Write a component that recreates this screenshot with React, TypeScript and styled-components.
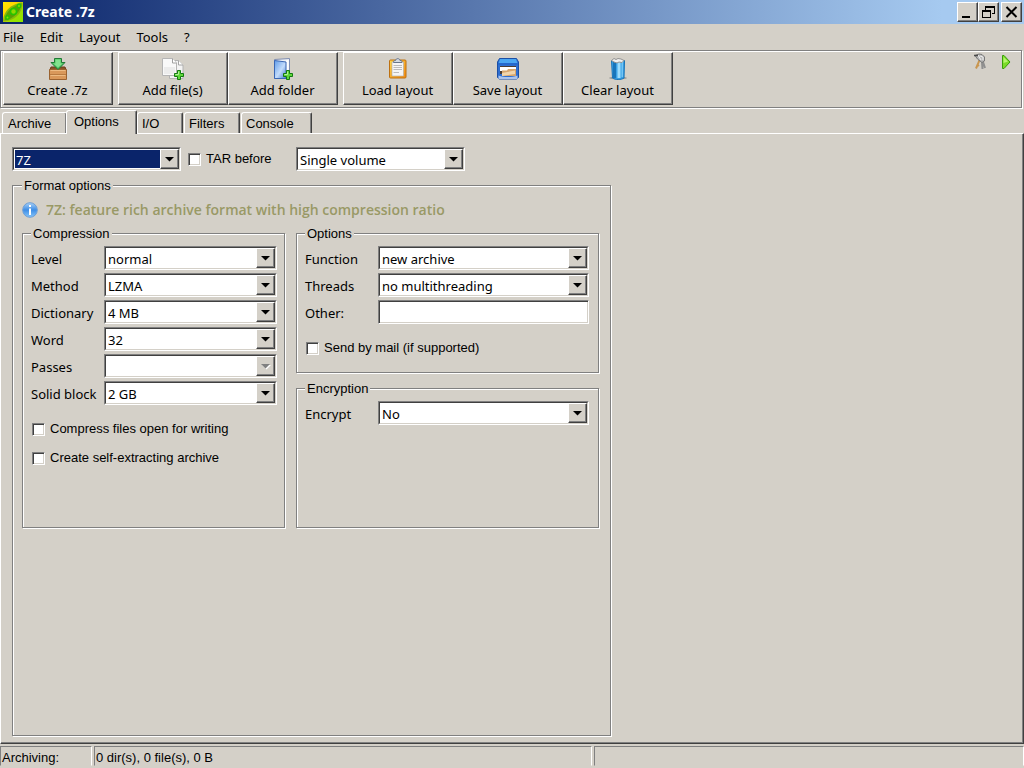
import React from "react";
import styled, { createGlobalStyle, css } from "styled-components";

const face = "#d4d0c8";
const shade = "#808080";
const dark = "#404040";
const navy = "#0a246a";
const uiFont = `"Noto Sans", sans-serif`;
const formFont = `"Liberation Sans", sans-serif`;

const GlobalStyle = createGlobalStyle`
  *, *::before, *::after { box-sizing: border-box; }
  body { margin: 0; background: ${face}; }
  body, button, select, input { font-family: ${uiFont}; font-size: 13px; line-height: 16px; color: #000; }
`;

const raised = css`
  border: 1px solid;
  border-color: #fff ${dark} ${dark} #fff;
  box-shadow: inset -1px -1px 0 ${shade};
`;

const Window = styled.div`
  display: flex;
  flex-direction: column;
  min-height: 100vh;
  background: ${face};
`;

const TitleBar = styled.header`
  display: flex;
  align-items: center;
  height: 24px;
  padding: 0 2px 0 3px;
  background: linear-gradient(to right, ${navy}, #a6caf0 92%);
`;

const Title = styled.h1`
  flex: 1;
  margin: 0 0 0 3px;
  font: bold 14px/20px ${uiFont};
  color: #fff;
`;

const CaptionButton = styled.button<{ $apart?: boolean }>`
  ${raised}
  display: grid;
  place-items: center;
  width: 21px;
  height: 20px;
  margin-left: ${(p) => (p.$apart ? 2 : 0)}px;
  padding: 0;
  background: ${face};
`;

const MenuBar = styled.nav`
  display: flex;
  gap: 16px;
  height: 26px;
  padding: 5px 3px;
`;

const MenuLink = styled.a`
  color: #000;
  text-decoration: none;
`;

const ToolBar = styled.div`
  display: flex;
  align-items: flex-start;
  height: 58px;
  margin-right: 2px;
  padding: 1px 7px 0 2px;
  border: 1px solid ${shade};
  box-shadow: 1px 1px 0 #fff, inset 1px 1px 0 #fff;
`;

const ToolGroup = styled.div`
  display: flex;
  margin-right: 5px;
`;

const ToolButton = styled.button`
  ${raised}
  display: flex;
  flex-direction: column;
  align-items: center;
  gap: 2px;
  width: 110px;
  height: 53px;
  padding: 5px 1px 0 0;
  background: ${face};
`;

const ToolExtras = styled.div`
  display: flex;
  gap: 10px;
  margin-left: auto;
  padding-top: 1px;
`;

const PlainButton = styled.button`
  padding: 0;
  border: 0;
  background: none;
  line-height: 0;
`;

const TabList = styled.div`
  display: flex;
  align-items: flex-end;
  height: 25px;
  padding-left: 2px;
`;

const Tab = styled.button<{ $width: number; $active?: boolean }>`
  ${raised}
  position: relative;
  width: ${(p) => p.$width}px;
  height: ${(p) => (p.$active ? 24 : 21)}px;
  margin-bottom: ${(p) => (p.$active ? -1 : 0)}px;
  margin-right: ${(p) => (p.$active ? 0 : 1)}px;
  padding: ${(p) => (p.$active ? "0 0 1px 7px" : "1px 0 0 4px")};
  border-bottom: 0;
  border-radius: 3px 2px 0 0;
  box-shadow: inset -1px 0 0 ${shade};
  background: ${face};
  font-family: ${formFont};
  text-align: left;
  z-index: ${(p) => (p.$active ? 1 : 0)};

  &:first-child {
    margin-right: -1px;
    padding-left: 5px;
  }
`;

const Page = styled.main`
  flex: 1;
  display: flex;
  flex-direction: column;
  padding: 13px 10px 7px 11px;
  border: 1px solid;
  border-color: #fff ${dark} ${dark} #fff;
  box-shadow: inset -1px -1px 0 ${shade};
`;

const FormatRow = styled.div`
  display: flex;
  align-items: center;
  width: 453px;
  margin-bottom: 5px;
`;

const FormatCombo = styled.div`
  width: 169px;
`;

const TarOption = styled.div`
  flex: 1;
  padding-left: 7px;
`;

const Group = styled.fieldset<{ $right?: number }>`
  min-width: 0;
  margin: 0;
  padding: 4px ${(p) => p.$right ?? 7}px 0 8px;
  border: 1px solid ${shade};
  box-shadow: 1px 1px 0 #fff, inset 1px 1px 0 #fff;
`;

const Legend = styled.legend`
  padding: 2px 2px 0;
  background: ${face};
  font-family: ${formFont};
`;

const FormatGroup = styled(Group)`
  flex: 1;
  width: 100%;
  max-width: 599px;
  padding: 8px 11px 0 9px;
`;

const Info = styled.p`
  display: flex;
  align-items: center;
  gap: 8px;
  margin: 0 0 6px;
  font-family: "Open Sans", sans-serif;
  font-size: 14px;
  font-weight: 600;
  color: #999966;
`;

const Columns = styled.div`
  display: grid;
  grid-template-columns: 263fr 303fr;
  gap: 11px;
`;

const Column = styled.div`
  display: flex;
  flex-direction: column;
  gap: 6px;
`;

const CompressionGroup = styled(Group)`
  min-height: 304px;
`;

const OptionsGroup = styled(Group)`
  min-height: 149px;
`;

const EncryptionGroup = styled(Group)`
  flex: 1;
`;

const Fields = styled.div`
  display: grid;
  gap: 3px;
`;

const FieldRow = styled.div`
  display: grid;
  grid-template-columns: 73px 1fr;
  align-items: center;
`;

const FieldLabel = styled.label`
  padding-top: 2px;
`;

const Checks = styled.div`
  display: grid;
  gap: 13px;
  padding: 16px 0 0 1px;
`;

const CheckLabel = styled.label`
  display: flex;
  align-items: center;
  gap: 5px;
  font-family: ${formFont};
`;

const CheckInput = styled.input`
  appearance: none;
  width: 13px;
  height: 13px;
  margin: 0;
  border: 1px solid;
  border-color: ${shade} #fff #fff ${shade};
  background: #fff;
  box-shadow: inset 1px 1px 0 ${dark}, inset -1px -1px 0 ${face};
`;

const ComboFrame = styled.div`
  position: relative;
  height: 24px;
  border: 1px solid;
  border-color: ${shade} #fff #fff ${shade};
`;

const ComboSelect = styled.select<{ $selected?: boolean }>`
  appearance: none;
  display: block;
  width: 100%;
  height: 22px;
  padding: 1px 20px 0 2px;
  border: 1px solid;
  border-color: ${dark} ${face} ${face} ${dark};
  border-radius: 0;
  outline: none;
  background: ${(p) => (p.$selected ? navy : "#fff")};
  color: ${(p) => (p.$selected ? "#fff" : "#000")};
  box-shadow: inset 0 0 0 1px #fff;
  opacity: 1;
`;

const ComboArrow = styled.span`
  ${raised}
  position: absolute;
  top: 1px;
  right: 1px;
  display: grid;
  place-items: center;
  width: 19px;
  height: 20px;
  background: ${face};
  pointer-events: none;
`;

const TextBox = styled.input`
  width: 100%;
  height: 24px;
  padding: 0 3px;
  border: 1px solid;
  border-color: ${shade} #fff #fff ${shade};
  border-radius: 0;
  background: #fff;
  box-shadow: inset 1px 1px 0 ${dark}, inset -1px -1px 0 ${face};
`;

const StatusBar = styled.footer`
  display: grid;
  grid-template-columns: 92px 498fr 430fr;
  gap: 2px;
  padding: 2px 0;
  font-family: ${formFont};
`;

const StatusCell = styled.div`
  height: 20px;
  padding: 3px 1px 0;
  border: 1px solid;
  border-color: ${shade} #fff ${face} ${shade};
`;

interface ComboProps {
  id: string;
  value: string;
  label?: string;
  selected?: boolean;
  disabled?: boolean;
}

function Combo({ id, value, label, selected, disabled }: ComboProps) {
  return (
    <ComboFrame>
      <ComboSelect id={id} aria-label={label} $selected={selected} disabled={disabled}>
        <option>{value}</option>
      </ComboSelect>
      <ComboArrow aria-hidden="true">
        <svg width="11" height="7" viewBox="0 0 11 7">
          {disabled && <path d="M2 2h9L6.500 6.500z" fill="#fff" />}
          <path d="M1 1h9L5.500 5.500z" fill={disabled ? shade : "#000"} />
        </svg>
      </ComboArrow>
    </ComboFrame>
  );
}

function Field(props: ComboProps & { name: string }) {
  const { name, ...combo } = props;
  return (
    <FieldRow>
      <FieldLabel htmlFor={combo.id}>{name}</FieldLabel>
      <Combo {...combo} />
    </FieldRow>
  );
}

function Check({ children }: { children: React.ReactNode }) {
  return (
    <CheckLabel>
      <CheckInput type="checkbox" />
      {children}
    </CheckLabel>
  );
}

const AppIcon = () => (
  <svg width="20" height="20" viewBox="0 0 20 20" aria-hidden="true">
    <defs>
      <linearGradient id="app" x1="0" y1="0" x2="1" y2="1">
        <stop offset="0" stopColor="#ffe800" />
        <stop offset=".35" stopColor="#ffd400" />
        <stop offset=".65" stopColor="#9be000" />
        <stop offset="1" stopColor="#8ce600" />
      </linearGradient>
    </defs>
    <path d="M0 0h20v20H0z" fill="url(#app)" />
    <path d="M0 19.500C0 14 3 8 8 4.500 12 2 18 0 19.500.5c.5 3-1 9-5 13-4 4-10 6-14.500 6z" fill="#86b80a" />
    <path d="M2 18C2 12.500 6 7.500 10.500 5 14 3 18 1 18.500 1.500 18.500 5 16.500 9 13 12.500 9.500 16 5.500 18 2 18z" fill="#5a9f04" />
    <g fill="#8fd800" stroke="#25c400" strokeWidth="1.500">
      <circle cx="10.500" cy="9.500" r="3" />
      <circle cx="4.500" cy="15.500" r="1.700" />
      <circle cx="16" cy="4" r="1.700" />
    </g>
  </svg>
);

const PlusMark = ({ x, y }: { x: number; y: number }) => (
  <g transform={`translate(${x} ${y})`}>
    <path d="M3.500.5h3v3h3v3h-3v3h-3v-3h-3v-3h3z" fill="#5fd83a" stroke="#137a10" />
    <path d="M4.500 1.500v3h-3" fill="none" stroke="#b4f39a" />
  </g>
);

const CreateIcon = () => (
  <svg width="22" height="22" viewBox="0 0 22 22" aria-hidden="true">
    <path d="M4 9h14l1.500 4h-17z" fill="#8a5528" stroke="#6c3c18" />
    <path d="M2.500 11.500h17v10h-17z" fill="#d9985a" stroke="#9a6230" />
    <path d="M3 16.500h16" stroke="#b87a40" />
    <path d="M3.500 12.500h15M3.500 17.500h15" stroke="#edbb82" />
    <path d="M7.500.5h7v4h3.500L11 11.500 4 4.500h3.500z" fill="#4fc463" stroke="#207a35" />
    <path d="M8.500 1.500h5v4h2L11 9.500 6.500 5.500h2z" fill="#83e28e" />
  </svg>
);

const AddFilesIcon = () => (
  <svg width="24" height="22" viewBox="0 0 24 22" aria-hidden="true">
    <path d="M8.500 2.500h9l4.500 4.500v13.500H8.500z" fill="#f3f3f3" stroke="#b2b2b2" />
    <path d="M17.500 2.500V7H22" fill="#fff" stroke="#a5a5a5" />
    <path d="M1.500.5h10L15.500 5v12.500h-14z" fill="#f9f9f9" stroke="#b5b5b5" />
    <path d="M3 9h11v7H3z" fill="#ececec" />
    <path d="M11.500.5V5h4" fill="#fff" stroke="#a0a0a0" />
    <PlusMark x={13} y={12} />
  </svg>
);

const AddFolderIcon = () => (
  <svg width="22" height="22" viewBox="0 0 22 22" aria-hidden="true">
    <defs>
      <linearGradient id="folder" x1="0" y1="0" x2="1" y2="1">
        <stop offset="0" stopColor="#5f9cea" />
        <stop offset=".55" stopColor="#c3dcfb" />
        <stop offset="1" stopColor="#3f7bd0" />
      </linearGradient>
    </defs>
    <path d="M2.500 1.500 17.500.5v16l-2 4H2.500z" fill="#eef1f6" stroke="#7f8db0" />
    <path d="M14.500 2h2v15h-2z" fill="#fff" />
    <path d="M2.500 2.500l11.500 1.500v16.500H2.500z" fill="url(#folder)" stroke="#3a67b4" />
    <PlusMark x={11} y={12} />
  </svg>
);

const LoadIcon = () => (
  <svg width="22" height="22" viewBox="0 0 22 22" aria-hidden="true">
    <defs>
      <linearGradient id="board" x1="0" y1="0" x2="1" y2="1">
        <stop offset="0" stopColor="#ffd44a" />
        <stop offset="1" stopColor="#f28a12" />
      </linearGradient>
    </defs>
    <rect x="2.500" y="2" width="16.500" height="18" rx="1" fill="url(#board)" stroke="#bd7010" />
    <path d="M5 4h11.500v14H5z" fill="#f5f5f5" stroke="#aaa" strokeWidth=".6" />
    <path d="M6.500 7.500H15M6.500 9.500H15M6.500 11.500H15M6.500 14.500H12" stroke="#bbb" />
    <path d="M6.500 4.500c0-2 1-2 2-2 .5-2.500 4-2.500 4.500 0 1.500 0 2 0 2 2z" fill="#d3dae4" stroke="#66758b" />
  </svg>
);

const SaveIcon = () => (
  <svg width="22" height="22" viewBox="0 0 22 22" aria-hidden="true">
    <path d="M2.500.5h17L21.500 4v15.500l-2 1.500h-17L.5 19.500V4z" fill="#2e6ed0" stroke="#1c4fa5" />
    <path d="M3 1h16l1.500 4.500h-19z" fill="#4aa6f2" />
    <path d="M1 5h20v2H1z" fill="#2468cd" />
    <path d="M3 8h16v8H3z" fill="#4b3c32" />
    <path d="M3 9h16v4H3z" fill="#fff" />
    <path d="M5 12.500h5l1-1.500h8v7H5z" fill="#d7a56c" />
    <path d="M5 15 18 12.500V16L5 18z" fill="#f1d5ac" />
    <path d="M1.500 17.500c6 2 13 2 19 0v3.500h-19z" fill="#b9cdf0" opacity=".9" />
  </svg>
);

const ClearIcon = () => (
  <svg width="22" height="22" viewBox="0 0 22 22" aria-hidden="true">
    <ellipse cx="11" cy="20" rx="9" ry="1.500" fill="#9b9b98" />
    <path d="M4.500 2.500h13L17 20c-3 2-8.500 2-11.500 0z" fill="#3ba1e5" stroke="#1673b8" />
    <path d="M6 4h3v16H6z" fill="#1875bb" />
    <path d="M10.500 4h3v16h-3z" fill="#9ddcfc" />
    <path d="M14.500 4h1.500v15h-1.500z" fill="#74c5f4" />
    <path d="M4.500 2.500 7 .5l2 1 2-1 3 .5 3 1.500-2 2-3-.5-2 1-3-1z" fill="#f0f0f0" stroke="#929292" />
  </svg>
);

const KeysIcon = () => (
  <svg width="16" height="18" viewBox="0 0 16 18" aria-hidden="true">
    <path d="M7.500 7 5.500 12 4 15.500M5.500 12l1.500 1" fill="none" stroke="#c9964f" strokeWidth="2" />
    <path d="M10 9l.5 7M11 9l2 6" fill="none" stroke="#8f8f8f" strokeWidth="2" />
    <path d="M3 2.500 7 1l3 .5L12.500 4v4L10 9.500 5.500 6z" fill="#b9b9b9" stroke="#777" />
    <path d="M8 3l3 1v3M6 2l3 5" fill="none" stroke="#eee" />
    <path d="M2 2.500h4" stroke="#4b4b4b" strokeWidth="1.500" />
  </svg>
);

const PlayIcon = () => (
  <svg width="16" height="16" viewBox="0 0 16 16" aria-hidden="true">
    <path d="M4.500 1.500H6L12 8l-6 6.500H4.500z" fill="#7bdc28" stroke="#379d08" />
    <path d="M5.500 3v6L10 7.500z" fill="#b6f56f" />
  </svg>
);

const InfoIcon = () => (
  <svg width="16" height="16" viewBox="0 0 16 16" aria-hidden="true">
    <defs>
      <linearGradient id="info" x1="0" y1="0" x2="0" y2="1">
        <stop offset="0" stopColor="#a9d1f7" />
        <stop offset=".5" stopColor="#3f8ee6" />
        <stop offset="1" stopColor="#86c6fa" />
      </linearGradient>
    </defs>
    <circle cx="8" cy="8" r="7.300" fill="url(#info)" stroke="#6f9fd6" />
    <path d="M7 3h2v2H7zM7 6.500h2V13H7z" fill="#fff" />
  </svg>
);

export default function App() {
  return (
    <Window>
      <GlobalStyle />
      <TitleBar>
        <AppIcon />
        <Title>Create .7z</Title>
        <CaptionButton aria-label="Minimize">
          <svg width="15" height="14" viewBox="0 0 15 14">
            <path d="M2 11h8v2H2z" />
          </svg>
        </CaptionButton>
        <CaptionButton aria-label="Restore">
          <svg width="15" height="14" viewBox="0 0 15 14" shapeRendering="crispEdges">
            <path d="M4 1h10v8h-3V8h2V3H5v2H4zM1 5h9v8H1zm1 2v5h7V7z" fillRule="evenodd" />
          </svg>
        </CaptionButton>
        <CaptionButton aria-label="Close" $apart>
          <svg width="15" height="14" viewBox="0 0 15 14">
            <path d="M2.500 2l10 10M12.500 2l-10 10" stroke="#000" strokeWidth="2" />
          </svg>
        </CaptionButton>
      </TitleBar>

      <MenuBar>
        {["File", "Edit", "Layout", "Tools", "?"].map((item) => (
          <MenuLink href="#" key={item}>
            {item}
          </MenuLink>
        ))}
      </MenuBar>

      <ToolBar>
        <ToolGroup>
          <ToolButton>
            <CreateIcon />
            Create .7z
          </ToolButton>
        </ToolGroup>
        <ToolGroup>
          <ToolButton>
            <AddFilesIcon />
            Add file(s)
          </ToolButton>
          <ToolButton>
            <AddFolderIcon />
            Add folder
          </ToolButton>
        </ToolGroup>
        <ToolGroup>
          <ToolButton>
            <LoadIcon />
            Load layout
          </ToolButton>
          <ToolButton>
            <SaveIcon />
            Save layout
          </ToolButton>
          <ToolButton>
            <ClearIcon />
            Clear layout
          </ToolButton>
        </ToolGroup>
        <ToolExtras>
          <PlainButton aria-label="Password">
            <KeysIcon />
          </PlainButton>
          <PlainButton aria-label="Run">
            <PlayIcon />
          </PlainButton>
        </ToolExtras>
      </ToolBar>

      <TabList role="tablist">
        <Tab role="tab" $width={65}>Archive</Tab>
        <Tab role="tab" $width={71} $active aria-selected="true">Options</Tab>
        <Tab role="tab" $width={46}>I/O</Tab>
        <Tab role="tab" $width={56}>Filters</Tab>
        <Tab role="tab" $width={71}>Console</Tab>
      </TabList>

      <Page>
        <FormatRow>
          <FormatCombo>
            <Combo id="format" label="Format" value="7Z" selected />
          </FormatCombo>
          <TarOption>
            <Check>TAR before</Check>
          </TarOption>
          <FormatCombo>
            <Combo id="volume" label="Volume" value="Single volume" />
          </FormatCombo>
        </FormatRow>

        <FormatGroup>
          <Legend>Format options</Legend>
          <Info>
            <InfoIcon />
            7Z: feature rich archive format with high compression ratio
          </Info>
          <Columns>
            <CompressionGroup>
              <Legend>Compression</Legend>
              <Fields>
                <Field id="level" name="Level" value="normal" />
                <Field id="method" name="Method" value="LZMA" />
                <Field id="dictionary" name="Dictionary" value="4 MB" />
                <Field id="word" name="Word" value="32" />
                <Field id="passes" name="Passes" value="" disabled />
                <Field id="solid" name="Solid block" value="2 GB" />
              </Fields>
              <Checks>
                <Check>Compress files open for writing</Check>
                <Check>Create self-extracting archive</Check>
              </Checks>
            </CompressionGroup>
            <Column>
              <OptionsGroup $right={9}>
                <Legend>Options</Legend>
                <Fields>
                  <Field id="function" name="Function" value="new archive" />
                  <Field id="threads" name="Threads" value="no multithreading" />
                  <FieldRow>
                    <FieldLabel htmlFor="other">Other:</FieldLabel>
                    <TextBox id="other" type="text" />
                  </FieldRow>
                </Fields>
                <Checks>
                  <Check>Send by mail (if supported)</Check>
                </Checks>
              </OptionsGroup>
              <EncryptionGroup $right={9}>
                <Legend>Encryption</Legend>
                <Field id="encrypt" name="Encrypt" value="No" />
              </EncryptionGroup>
            </Column>
          </Columns>
        </FormatGroup>
      </Page>

      <StatusBar>
        <StatusCell>Archiving:</StatusCell>
        <StatusCell>0 dir(s), 0 file(s), 0 B</StatusCell>
        <StatusCell />
      </StatusBar>
    </Window>
  );
}
